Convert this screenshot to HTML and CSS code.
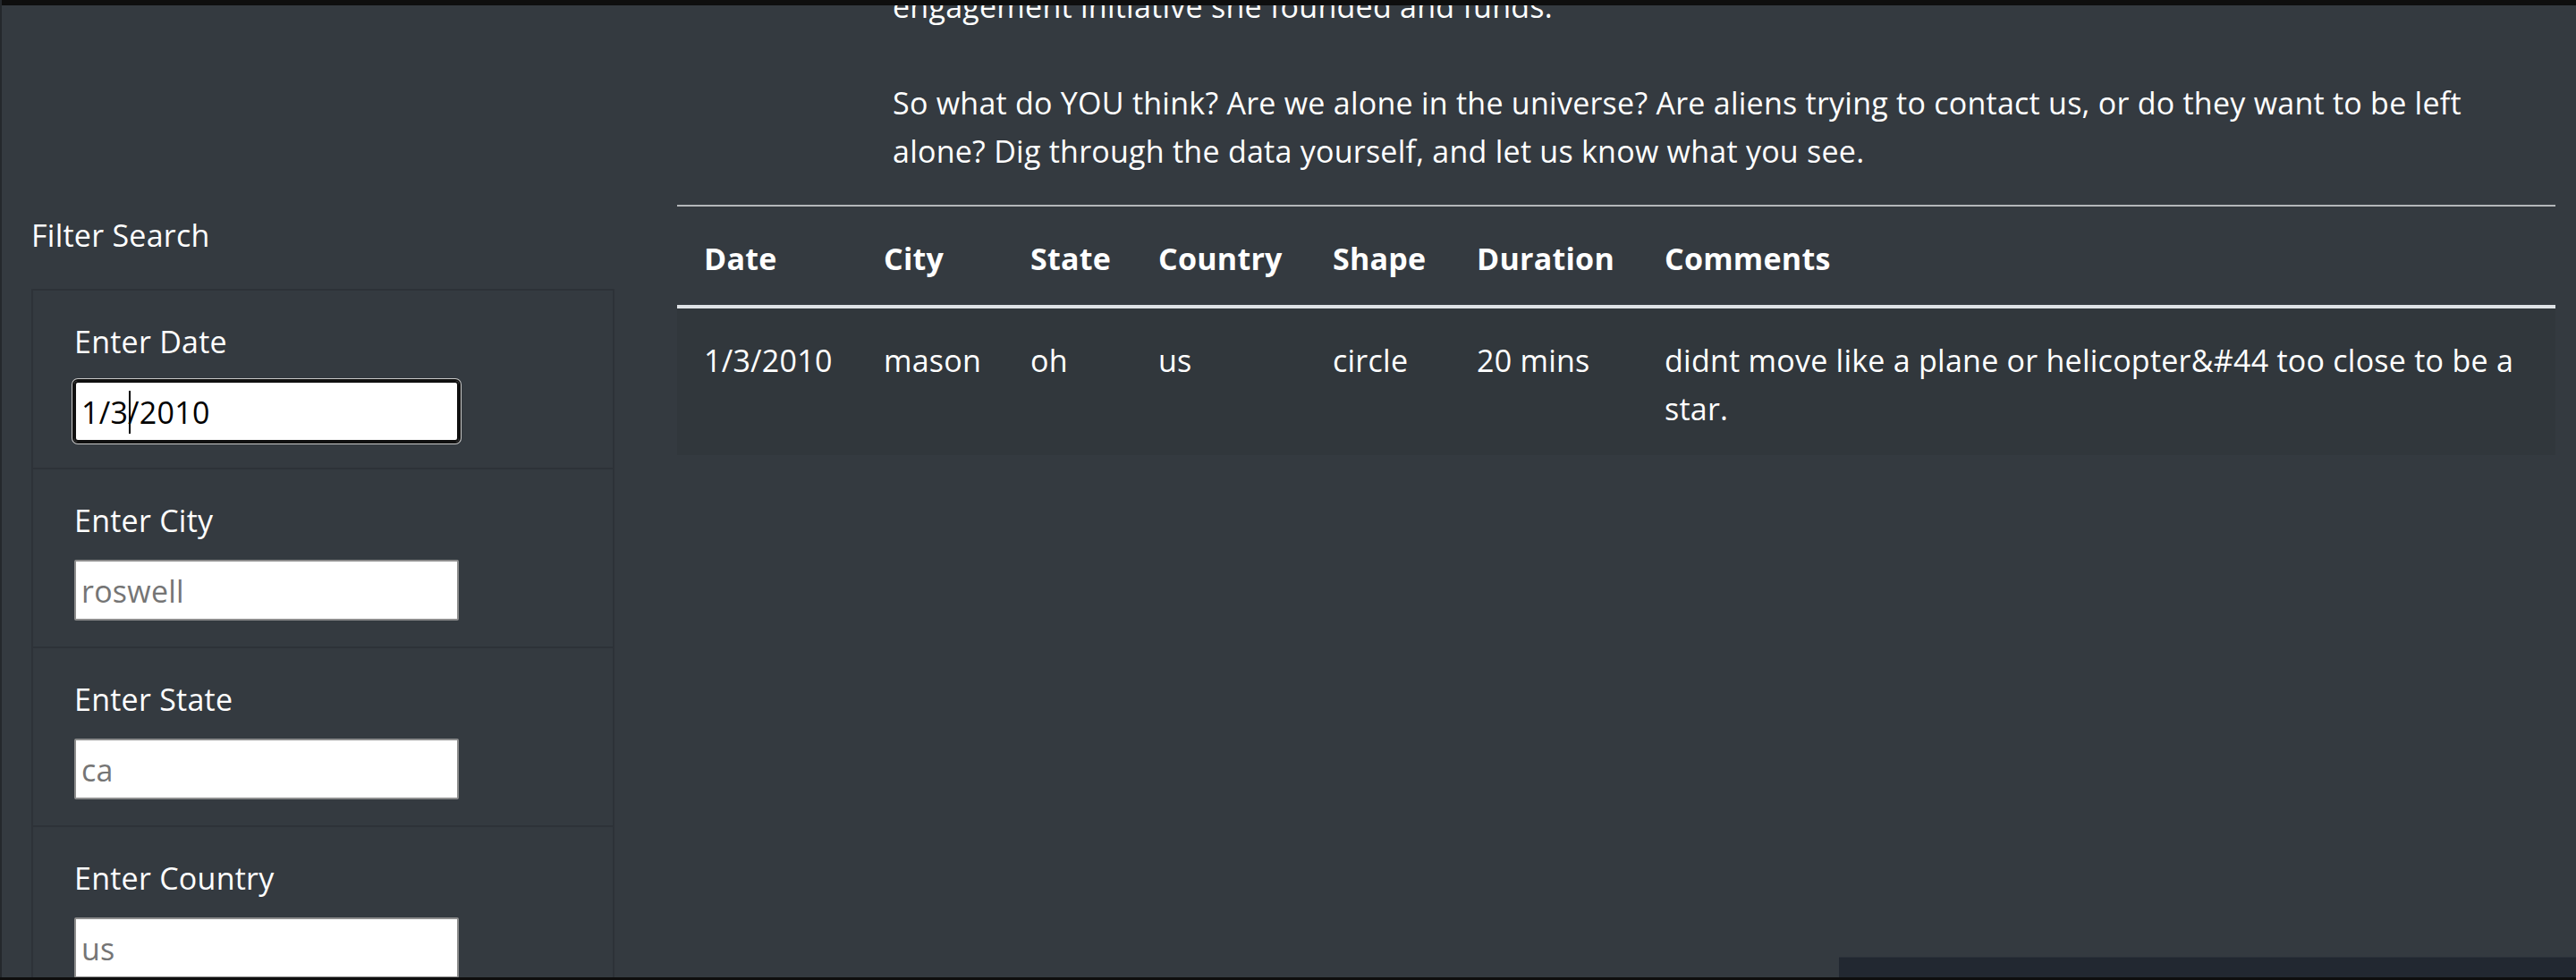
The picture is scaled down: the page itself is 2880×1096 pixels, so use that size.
FILE: index.html
```html
<!DOCTYPE html>
<html lang="en">
<head>
<meta charset="utf-8">
<title>UFO Sightings</title>
<link rel="stylesheet" href="styles.css">
</head>
<body>
<div class="frame-top"></div>
<div class="frame-left"></div>
<div class="frame-bottom"></div>
<div class="dock"></div>

<div class="layout">
  <aside class="sidebar">
    <h5 class="filter-title">Filter Search</h5>
    <ul class="filters">
      <li class="filter">
        <label class="filter-label" for="datetime">Enter Date</label>
        <div class="field-wrap">
          <input class="field field-focus" id="datetime" type="text" value="1/3/2010">
          <span class="caret"></span>
        </div>
      </li>
      <li class="filter">
        <label class="filter-label" for="city">Enter City</label>
        <div class="field-wrap">
          <input class="field" id="city" type="text" placeholder="roswell">
        </div>
      </li>
      <li class="filter">
        <label class="filter-label" for="state">Enter State</label>
        <div class="field-wrap">
          <input class="field" id="state" type="text" placeholder="ca">
        </div>
      </li>
      <li class="filter">
        <label class="filter-label" for="country">Enter Country</label>
        <div class="field-wrap">
          <input class="field" id="country" type="text" placeholder="us">
        </div>
      </li>
    </ul>
  </aside>

  <main class="main">
    <p class="intro">engagement initiative she founded and funds.<br><br>So what do YOU think? Are we alone in the universe? Are aliens trying to contact us, or do they want to be left alone? Dig through the data yourself, and let us know what you see.</p>

    <table class="ufo-table">
      <colgroup>
        <col class="c-date">
        <col class="c-city">
        <col class="c-state">
        <col class="c-country">
        <col class="c-shape">
        <col class="c-duration">
        <col class="c-comments">
      </colgroup>
      <thead>
        <tr>
          <th>Date</th>
          <th>City</th>
          <th>State</th>
          <th>Country</th>
          <th>Shape</th>
          <th>Duration</th>
          <th class="last">Comments</th>
        </tr>
      </thead>
      <tbody>
        <tr class="odd">
          <td>1/3/2010</td>
          <td>mason</td>
          <td>oh</td>
          <td>us</td>
          <td>circle</td>
          <td>20 mins</td>
          <td class="last">didnt move like a plane or helicopter&amp;#44 too close to be a star.</td>
        </tr>
      </tbody>
    </table>
  </main>
</div>
</body>
</html>
```

FILE: styles.css
```css
html, body {
  margin: 0;
  padding: 0;
  height: 1096px;
  overflow: hidden;
}

body {
  background: #343a40;
  color: #ffffff;
  font-family: "Open Sans", "Noto Sans", "Liberation Sans", sans-serif;
  font-size: 34px;
  line-height: 54px;
  letter-spacing: 0.25px;
}

/* window frame overlays */
.frame-top {
  position: fixed;
  top: 0;
  left: 0;
  right: 0;
  height: 6px;
  background: #0e0e0e;
  z-index: 10;
}
.frame-left {
  position: fixed;
  top: 0;
  bottom: 0;
  left: 0;
  width: 2px;
  background: #24282c;
  z-index: 10;
}
.frame-bottom {
  position: fixed;
  left: 0;
  right: 0;
  bottom: 0;
  height: 3px;
  background: #0e0e0e;
  z-index: 11;
}
.dock {
  position: fixed;
  left: 2056px;
  right: 0;
  bottom: 0;
  height: 25px;
  background: #222831;
  border-top: 1px solid #2c323b;
  z-index: 10;
}

.layout {
  display: grid;
  grid-template-columns: 652px 2100px;
  column-gap: 70px;
  padding-left: 35px;
  align-items: start;
}

/* sidebar */
.sidebar {
  padding-top: 236px;
}
.filter-title {
  margin: 0 0 33px;
  font-size: 34px;
  font-weight: 400;
  line-height: 54px;
}
.filters {
  list-style: none;
  margin: 0;
  padding: 0;
  border-bottom: 2px solid rgba(0, 0, 0, 0.125);
}
.filter {
  display: flex;
  flex-direction: column;
  align-items: flex-start;
  padding: 30px 45px 29px 46px;
  border: 2px solid rgba(0, 0, 0, 0.125);
  border-bottom: 0;
}
.filter-label {
  display: block;
  margin-bottom: 17px;
  line-height: 54px;
}
.field-wrap {
  position: relative;
  display: flex;
}
.field {
  box-sizing: border-box;
  width: 430px;
  height: 68px;
  margin: 0;
  padding: 2px 6px 0;
  border: 2px solid #8d8d8d;
  border-radius: 2px;
  background: #ffffff;
  color: #000000;
  font-family: "Open Sans", "Noto Sans", "Liberation Sans", sans-serif;
  font-size: 34px;
  letter-spacing: 0.25px;
  line-height: 54px;
}
.field::placeholder {
  color: #757575;
  opacity: 1;
}
.field-focus {
  border-color: #101010;
  border-radius: 4px;
  outline: 2px solid #101010;
  outline-offset: 0;
  box-shadow: 0 0 0 3px #c8c8c8;
}
.caret {
  position: absolute;
  left: 61px;
  top: 11px;
  width: 2px;
  height: 48px;
  background: #000000;
}

/* main column */
.main {
  margin-top: -20px;
  min-width: 0;
}
.intro {
  margin: 0 0 33px;
  padding-left: 241px;
  padding-right: 60px;
}

.ufo-table {
  width: 2100px;
  border-collapse: collapse;
  table-layout: fixed;
}
.c-date { width: 201px; }
.c-city { width: 164px; }
.c-state { width: 143px; }
.c-country { width: 195px; }
.c-shape { width: 161px; }
.c-duration { width: 210px; }
.c-comments { width: auto; }

.ufo-table th,
.ufo-table td {
  padding: 31px 24px 25px 30px;
  text-align: left;
  vertical-align: top;
  line-height: 54px;
}
.ufo-table th {
  font-weight: 700;
  border-top: 2px solid #b4b7ba;
  border-bottom: 4px solid #dee2e6;
}
.ufo-table .last {
  padding-right: 0;
}
.ufo-table tr.odd td {
  background: rgba(0, 0, 0, 0.05);
}
```
